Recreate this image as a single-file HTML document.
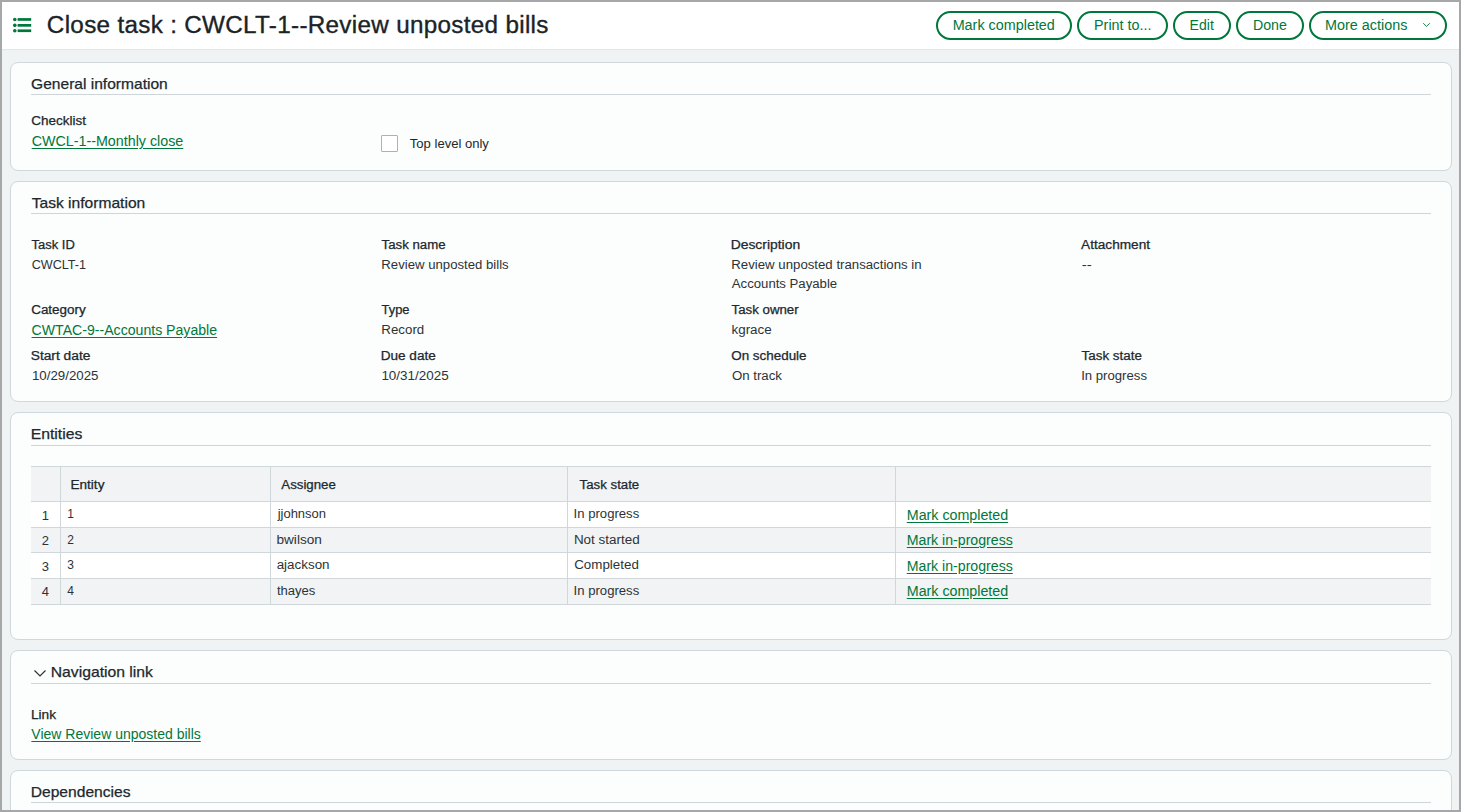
<!DOCTYPE html>
<html><head><meta charset="utf-8">
<style>
*{box-sizing:border-box;margin:0;padding:0}
html,body{width:1461px;height:812px;overflow:hidden;background:#f0f3f4}
body{font-family:"Liberation Sans",sans-serif;position:relative}
.t{position:absolute;white-space:nowrap}
.b{position:absolute}
</style></head><body>
<div class="b" style="left:2px;top:2px;width:1457px;height:808px;background:#f0f3f4"></div>
<div class="b" style="left:2px;top:2px;width:1457px;height:47px;background:#ffffff"></div>
<div class="b" style="left:2px;top:49px;width:1457px;height:1px;background:#e1e7ea"></div>
<svg class="b" style="left:11px;top:15px" width="22" height="20" viewBox="0 0 22 20"><circle cx="3.8" cy="4.45" r="1.8" fill="#00773b"/><rect x="6.6" y="3.1" width="13.6" height="2.7" fill="#00773b"/><circle cx="3.8" cy="10.35" r="1.8" fill="#00773b"/><rect x="6.6" y="9.0" width="13.6" height="2.7" fill="#00773b"/><circle cx="3.8" cy="15.75" r="1.8" fill="#00773b"/><rect x="6.6" y="14.4" width="13.6" height="2.7" fill="#00773b"/></svg>
<div class="t" style="left:46.00px;top:14.43px;font-size:23px;line-height:23px;color:#1b2328;font-weight:normal;transform:translateX(0.865px) scaleX(1.0533);transform-origin:0 0;letter-spacing:0.3px;-webkit-text-stroke:0.35px #1b2328;">Close task : CWCLT-1--Review unposted bills</div>
<div class="b" style="left:936px;top:11px;width:136px;height:29px;border:2px solid #00773b;border-radius:15px;background:#fff"></div>
<div class="t" style="left:952.00px;top:17.75px;font-size:14px;line-height:14px;color:#00773b;font-weight:normal;transform:translateX(0.655px) scaleX(1.0261);transform-origin:0 0;">Mark completed</div>
<div class="b" style="left:1077px;top:11px;width:91px;height:29px;border:2px solid #00773b;border-radius:15px;background:#fff"></div>
<div class="t" style="left:1094.00px;top:17.75px;font-size:14px;line-height:14px;color:#00773b;font-weight:normal;transform:translateX(0.066px) scaleX(1.0236);transform-origin:0 0;">Print to...</div>
<div class="b" style="left:1173px;top:11px;width:58px;height:29px;border:2px solid #00773b;border-radius:15px;background:#fff"></div>
<div class="t" style="left:1189.00px;top:17.75px;font-size:14px;line-height:14px;color:#00773b;font-weight:normal;transform:translateX(0.623px) scaleX(1.0049);transform-origin:0 0;">Edit</div>
<div class="b" style="left:1236px;top:11px;width:68px;height:29px;border:2px solid #00773b;border-radius:15px;background:#fff"></div>
<div class="t" style="left:1252.00px;top:17.75px;font-size:14px;line-height:14px;color:#00773b;font-weight:normal;transform:translateX(0.880px) scaleX(1.0143);transform-origin:0 0;">Done</div>
<div class="b" style="left:1309px;top:11px;width:138px;height:29px;border:2px solid #00773b;border-radius:15px;background:#fff"></div>
<div class="t" style="left:1325.00px;top:17.75px;font-size:14px;line-height:14px;color:#00773b;font-weight:normal;transform:translateX(0.039px) scaleX(1.0266);transform-origin:0 0;">More actions</div>
<svg class="b" style="left:1422px;top:22px" width="9" height="6" viewBox="0 0 9 6"><path d="M1.2 1.2 L4.5 4.4 L7.8 1.2" fill="none" stroke="#00773b" stroke-width="0.9"/></svg>
<div class="b" style="left:10px;top:62px;width:1442px;height:109px;background:#fcfdfd;border:1px solid #cfd8dc;border-radius:8px"></div>
<div class="t" style="left:31.00px;top:76.10px;font-size:15px;line-height:15px;color:#20282d;font-weight:normal;transform:translateX(0.070px) scaleX(1.0373);transform-origin:0 0;-webkit-text-stroke:0.25px #20282d;">General information</div>
<div class="b" style="left:31px;top:94px;width:1400px;height:1px;background:#cdd5d9"></div>
<div class="t" style="left:31.00px;top:115.14px;font-size:12px;line-height:12px;color:#20282d;font-weight:normal;transform:translateX(0.369px) scaleX(1.1224);transform-origin:0 0;-webkit-text-stroke:0.25px #20282d;">Checklist</div>
<div class="t" style="left:31.00px;top:133.75px;font-size:14px;line-height:14px;color:#00773b;font-weight:normal;transform:translateX(0.672px) scaleX(1.0202);transform-origin:0 0;text-decoration:underline;text-underline-offset:1.5px;">CWCL-1--Monthly close</div>
<div class="b" style="left:381px;top:135px;width:17px;height:17px;border:1px solid #a9b3b7;background:#fff;border-radius:1px"></div>
<div class="t" style="left:409.00px;top:137.00px;font-size:13px;line-height:13px;color:#20282d;font-weight:normal;transform:translateX(0.829px) scaleX(1.0038);transform-origin:0 0;">Top level only</div>
<div class="b" style="left:10px;top:181px;width:1442px;height:221px;background:#fcfdfd;border:1px solid #cfd8dc;border-radius:8px"></div>
<div class="t" style="left:31.00px;top:195.30px;font-size:15px;line-height:15px;color:#20282d;font-weight:normal;transform:translateX(0.657px) scaleX(1.0399);transform-origin:0 0;-webkit-text-stroke:0.25px #20282d;">Task information</div>
<div class="b" style="left:31px;top:213px;width:1400px;height:1px;background:#cdd5d9"></div>
<div class="t" style="left:31.00px;top:238.74px;font-size:12px;line-height:12px;color:#20282d;font-weight:normal;transform:translateX(0.577px) scaleX(1.0815);transform-origin:0 0;-webkit-text-stroke:0.25px #20282d;">Task ID</div>
<div class="t" style="left:381.00px;top:238.74px;font-size:12px;line-height:12px;color:#20282d;font-weight:normal;transform:translateX(0.578px) scaleX(1.1021);transform-origin:0 0;-webkit-text-stroke:0.25px #20282d;">Task name</div>
<div class="t" style="left:730.00px;top:238.74px;font-size:12px;line-height:12px;color:#20282d;font-weight:normal;transform:translateX(0.672px) scaleX(1.1566);transform-origin:0 0;-webkit-text-stroke:0.25px #20282d;">Description</div>
<div class="t" style="left:1081.00px;top:238.74px;font-size:12px;line-height:12px;color:#20282d;font-weight:normal;transform:translateX(0.090px) scaleX(1.1353);transform-origin:0 0;-webkit-text-stroke:0.25px #20282d;">Attachment</div>
<div class="t" style="left:31.00px;top:303.84px;font-size:12px;line-height:12px;color:#20282d;font-weight:normal;transform:translateX(0.164px) scaleX(1.1208);transform-origin:0 0;-webkit-text-stroke:0.25px #20282d;">Category</div>
<div class="t" style="left:381.00px;top:303.64px;font-size:12px;line-height:12px;color:#20282d;font-weight:normal;transform:translateX(0.576px) scaleX(1.0736);transform-origin:0 0;-webkit-text-stroke:0.25px #20282d;">Type</div>
<div class="t" style="left:731.00px;top:303.64px;font-size:12px;line-height:12px;color:#20282d;font-weight:normal;transform:translateX(0.578px) scaleX(1.1053);transform-origin:0 0;-webkit-text-stroke:0.25px #20282d;">Task owner</div>
<div class="t" style="left:30.00px;top:349.64px;font-size:12px;line-height:12px;color:#20282d;font-weight:normal;transform:translateX(0.719px) scaleX(1.1460);transform-origin:0 0;-webkit-text-stroke:0.25px #20282d;">Start date</div>
<div class="t" style="left:380.00px;top:349.74px;font-size:12px;line-height:12px;color:#20282d;font-weight:normal;transform:translateX(0.690px) scaleX(1.1307);transform-origin:0 0;-webkit-text-stroke:0.25px #20282d;">Due date</div>
<div class="t" style="left:731.00px;top:349.74px;font-size:12px;line-height:12px;color:#20282d;font-weight:normal;transform:translateX(0.199px) scaleX(1.1183);transform-origin:0 0;-webkit-text-stroke:0.25px #20282d;">On schedule</div>
<div class="t" style="left:1081.00px;top:349.74px;font-size:12px;line-height:12px;color:#20282d;font-weight:normal;transform:translateX(0.579px) scaleX(1.1152);transform-origin:0 0;-webkit-text-stroke:0.25px #20282d;">Task state</div>
<div class="t" style="left:31.00px;top:258.74px;font-size:12px;line-height:12px;color:#2b3337;font-weight:normal;transform:translateX(0.651px) scaleX(1.0508);transform-origin:0 0;">CWCLT-1</div>
<div class="t" style="left:381.00px;top:258.94px;font-size:12px;line-height:12px;color:#2b3337;font-weight:normal;transform:translateX(0.329px) scaleX(1.0973);transform-origin:0 0;">Review unposted bills</div>
<div class="t" style="left:731.00px;top:258.94px;font-size:12px;line-height:12px;color:#2b3337;font-weight:normal;transform:translateX(0.325px) scaleX(1.1014);transform-origin:0 0;">Review unposted transactions in</div>
<div class="t" style="left:1081.00px;top:258.84px;font-size:12px;line-height:12px;color:#2b3337;font-weight:normal;transform:translateX(0.831px) scaleX(1.2567);transform-origin:0 0;">--</div>
<div class="t" style="left:731.00px;top:278.04px;font-size:12px;line-height:12px;color:#2b3337;font-weight:normal;transform:translateX(0.814px) scaleX(1.0965);transform-origin:0 0;">Accounts Payable</div>
<div class="t" style="left:381.00px;top:323.74px;font-size:12px;line-height:12px;color:#2b3337;font-weight:normal;transform:translateX(0.318px) scaleX(1.1092);transform-origin:0 0;">Record</div>
<div class="t" style="left:731.00px;top:323.74px;font-size:12px;line-height:12px;color:#2b3337;font-weight:normal;transform:translateX(0.476px) scaleX(1.1171);transform-origin:0 0;">kgrace</div>
<div class="t" style="left:31.00px;top:370.24px;font-size:12px;line-height:12px;color:#2b3337;font-weight:normal;transform:translateX(0.969px) scaleX(1.1065);transform-origin:0 0;">10/29/2025</div>
<div class="t" style="left:381.00px;top:370.24px;font-size:12px;line-height:12px;color:#2b3337;font-weight:normal;transform:translateX(0.390px) scaleX(1.1198);transform-origin:0 0;">10/31/2025</div>
<div class="t" style="left:731.00px;top:370.24px;font-size:12px;line-height:12px;color:#2b3337;font-weight:normal;transform:translateX(0.888px) scaleX(1.1031);transform-origin:0 0;">On track</div>
<div class="t" style="left:1081.00px;top:370.24px;font-size:12px;line-height:12px;color:#2b3337;font-weight:normal;transform:translateX(0.198px) scaleX(1.0954);transform-origin:0 0;">In progress</div>
<div class="t" style="left:31.00px;top:323.05px;font-size:14px;line-height:14px;color:#00773b;font-weight:normal;transform:translateX(0.589px) scaleX(1.0074);transform-origin:0 0;text-decoration:underline;text-underline-offset:1.5px;">CWTAC-9--Accounts Payable</div>
<div class="b" style="left:10px;top:412px;width:1442px;height:228px;background:#fcfdfd;border:1px solid #cfd8dc;border-radius:8px"></div>
<div class="t" style="left:30.00px;top:426.10px;font-size:15px;line-height:15px;color:#20282d;font-weight:normal;transform:translateX(0.725px) scaleX(1.0498);transform-origin:0 0;-webkit-text-stroke:0.25px #20282d;">Entities</div>
<div class="b" style="left:31px;top:445px;width:1400px;height:1px;background:#cdd5d9"></div>
<div class="b" style="left:31px;top:466px;width:1400px;height:36px;background:#f1f3f5"></div>
<div class="b" style="left:31px;top:502px;width:1400px;height:25px;background:#ffffff"></div>
<div class="b" style="left:31px;top:528px;width:1400px;height:24px;background:#f1f3f5"></div>
<div class="b" style="left:31px;top:553px;width:1400px;height:25px;background:#ffffff"></div>
<div class="b" style="left:31px;top:579px;width:1400px;height:25px;background:#f1f3f5"></div>
<div class="b" style="left:31px;top:466px;width:1400px;height:1px;background:#d0d7db"></div>
<div class="b" style="left:31px;top:501px;width:1400px;height:1px;background:#d0d7db"></div>
<div class="b" style="left:31px;top:527px;width:1400px;height:1px;background:#d0d7db"></div>
<div class="b" style="left:31px;top:552px;width:1400px;height:1px;background:#d0d7db"></div>
<div class="b" style="left:31px;top:578px;width:1400px;height:1px;background:#d0d7db"></div>
<div class="b" style="left:31px;top:604px;width:1400px;height:1px;background:#d0d7db"></div>
<div class="b" style="left:60px;top:466px;width:1px;height:138px;background:#d0d7db"></div>
<div class="b" style="left:270px;top:466px;width:1px;height:138px;background:#d0d7db"></div>
<div class="b" style="left:567px;top:466px;width:1px;height:138px;background:#d0d7db"></div>
<div class="b" style="left:895px;top:466px;width:1px;height:138px;background:#d0d7db"></div>
<div class="t" style="left:70.00px;top:479.14px;font-size:12px;line-height:12px;color:#20282d;font-weight:normal;transform:translateX(0.469px) scaleX(1.1311);transform-origin:0 0;-webkit-text-stroke:0.25px #20282d;">Entity</div>
<div class="t" style="left:281.00px;top:479.14px;font-size:12px;line-height:12px;color:#20282d;font-weight:normal;transform:translateX(0.285px) scaleX(1.1054);transform-origin:0 0;-webkit-text-stroke:0.25px #20282d;">Assignee</div>
<div class="t" style="left:579.00px;top:479.14px;font-size:12px;line-height:12px;color:#20282d;font-weight:normal;transform:translateX(0.583px) scaleX(1.1040);transform-origin:0 0;-webkit-text-stroke:0.25px #20282d;">Task state</div>
<div class="t" style="left:41.80px;top:508.70px;font-size:13px;line-height:13px;color:#2b3337;font-weight:normal;">1</div>
<div class="t" style="left:67.20px;top:507.64px;font-size:12px;line-height:12px;color:#2b3337;font-weight:normal;">1</div>
<div class="t" style="left:277.00px;top:507.64px;font-size:12px;line-height:12px;color:#2b3337;font-weight:normal;transform:translateX(0.661px) scaleX(1.0816);transform-origin:0 0;">jjohnson</div>
<div class="t" style="left:573.00px;top:507.64px;font-size:12px;line-height:12px;color:#2b3337;font-weight:normal;transform:translateX(0.571px) scaleX(1.0937);transform-origin:0 0;">In progress</div>
<div class="t" style="left:906.00px;top:507.95px;font-size:14px;line-height:14px;color:#00773b;font-weight:normal;transform:translateX(0.753px) scaleX(1.0181);transform-origin:0 0;text-decoration:underline;text-underline-offset:1.5px;">Mark completed</div>
<div class="t" style="left:41.80px;top:534.20px;font-size:13px;line-height:13px;color:#2b3337;font-weight:normal;">2</div>
<div class="t" style="left:67.20px;top:534.04px;font-size:12px;line-height:12px;color:#2b3337;font-weight:normal;">2</div>
<div class="t" style="left:276.00px;top:534.04px;font-size:12px;line-height:12px;color:#2b3337;font-weight:normal;transform:translateX(0.465px) scaleX(1.1345);transform-origin:0 0;">bwilson</div>
<div class="t" style="left:573.00px;top:534.04px;font-size:12px;line-height:12px;color:#2b3337;font-weight:normal;transform:translateX(0.875px) scaleX(1.1203);transform-origin:0 0;">Not started</div>
<div class="t" style="left:906.00px;top:533.15px;font-size:14px;line-height:14px;color:#00773b;font-weight:normal;transform:translateX(0.753px) scaleX(1.0094);transform-origin:0 0;text-decoration:underline;text-underline-offset:1.5px;">Mark in-progress</div>
<div class="t" style="left:41.80px;top:559.60px;font-size:13px;line-height:13px;color:#2b3337;font-weight:normal;">3</div>
<div class="t" style="left:67.20px;top:558.94px;font-size:12px;line-height:12px;color:#2b3337;font-weight:normal;">3</div>
<div class="t" style="left:276.00px;top:558.94px;font-size:12px;line-height:12px;color:#2b3337;font-weight:normal;transform:translateX(0.672px) scaleX(1.1165);transform-origin:0 0;">ajackson</div>
<div class="t" style="left:574.00px;top:558.94px;font-size:12px;line-height:12px;color:#2b3337;font-weight:normal;transform:translateX(0.220px) scaleX(1.1131);transform-origin:0 0;">Completed</div>
<div class="t" style="left:906.00px;top:558.55px;font-size:14px;line-height:14px;color:#00773b;font-weight:normal;transform:translateX(0.753px) scaleX(1.0094);transform-origin:0 0;text-decoration:underline;text-underline-offset:1.5px;">Mark in-progress</div>
<div class="t" style="left:41.80px;top:585.10px;font-size:13px;line-height:13px;color:#2b3337;font-weight:normal;">4</div>
<div class="t" style="left:67.20px;top:584.54px;font-size:12px;line-height:12px;color:#2b3337;font-weight:normal;">4</div>
<div class="t" style="left:276.00px;top:584.54px;font-size:12px;line-height:12px;color:#2b3337;font-weight:normal;transform:translateX(0.887px) scaleX(1.0889);transform-origin:0 0;">thayes</div>
<div class="t" style="left:573.00px;top:584.54px;font-size:12px;line-height:12px;color:#2b3337;font-weight:normal;transform:translateX(0.571px) scaleX(1.0938);transform-origin:0 0;">In progress</div>
<div class="t" style="left:906.00px;top:583.95px;font-size:14px;line-height:14px;color:#00773b;font-weight:normal;transform:translateX(0.754px) scaleX(1.0181);transform-origin:0 0;text-decoration:underline;text-underline-offset:1.5px;">Mark completed</div>
<div class="b" style="left:10px;top:650px;width:1442px;height:110px;background:#fcfdfd;border:1px solid #cfd8dc;border-radius:8px"></div>
<div class="t" style="left:50.00px;top:663.90px;font-size:15px;line-height:15px;color:#20282d;font-weight:normal;transform:translateX(0.727px) scaleX(1.0474);transform-origin:0 0;-webkit-text-stroke:0.25px #20282d;">Navigation link</div>
<div class="b" style="left:31px;top:683px;width:1400px;height:1px;background:#cdd5d9"></div>
<svg class="b" style="left:33px;top:668px" width="14" height="10" viewBox="0 0 14 10"><path d="M1.5 2.5 L7 8 L12.5 2.5" fill="none" stroke="#2a3236" stroke-width="1.2"/></svg>
<div class="t" style="left:30.00px;top:708.74px;font-size:12px;line-height:12px;color:#20282d;font-weight:normal;transform:translateX(0.881px) scaleX(1.1407);transform-origin:0 0;-webkit-text-stroke:0.25px #20282d;">Link</div>
<div class="t" style="left:31.00px;top:726.55px;font-size:14px;line-height:14px;color:#00773b;font-weight:normal;transform:translateX(0.343px) scaleX(1.0004);transform-origin:0 0;text-decoration:underline;text-underline-offset:1.5px;">View Review unposted bills</div>
<div class="b" style="left:10px;top:770px;width:1442px;height:130px;background:#fcfdfd;border:1px solid #cfd8dc;border-radius:8px"></div>
<div class="t" style="left:30.00px;top:784.10px;font-size:15px;line-height:15px;color:#20282d;font-weight:normal;transform:translateX(0.733px) scaleX(1.0401);transform-origin:0 0;-webkit-text-stroke:0.25px #20282d;">Dependencies</div>
<div class="b" style="left:31px;top:802px;width:1400px;height:1px;background:#cdd5d9"></div>
<div class="b" style="left:0px;top:0px;width:1461px;height:2px;background:#a5a7a9"></div>
<div class="b" style="left:0px;top:810px;width:1461px;height:2px;background:#a5a7a9"></div>
<div class="b" style="left:0px;top:0px;width:2px;height:812px;background:#a5a7a9"></div>
<div class="b" style="left:1459px;top:0px;width:2px;height:812px;background:#a5a7a9"></div>
</body></html>
